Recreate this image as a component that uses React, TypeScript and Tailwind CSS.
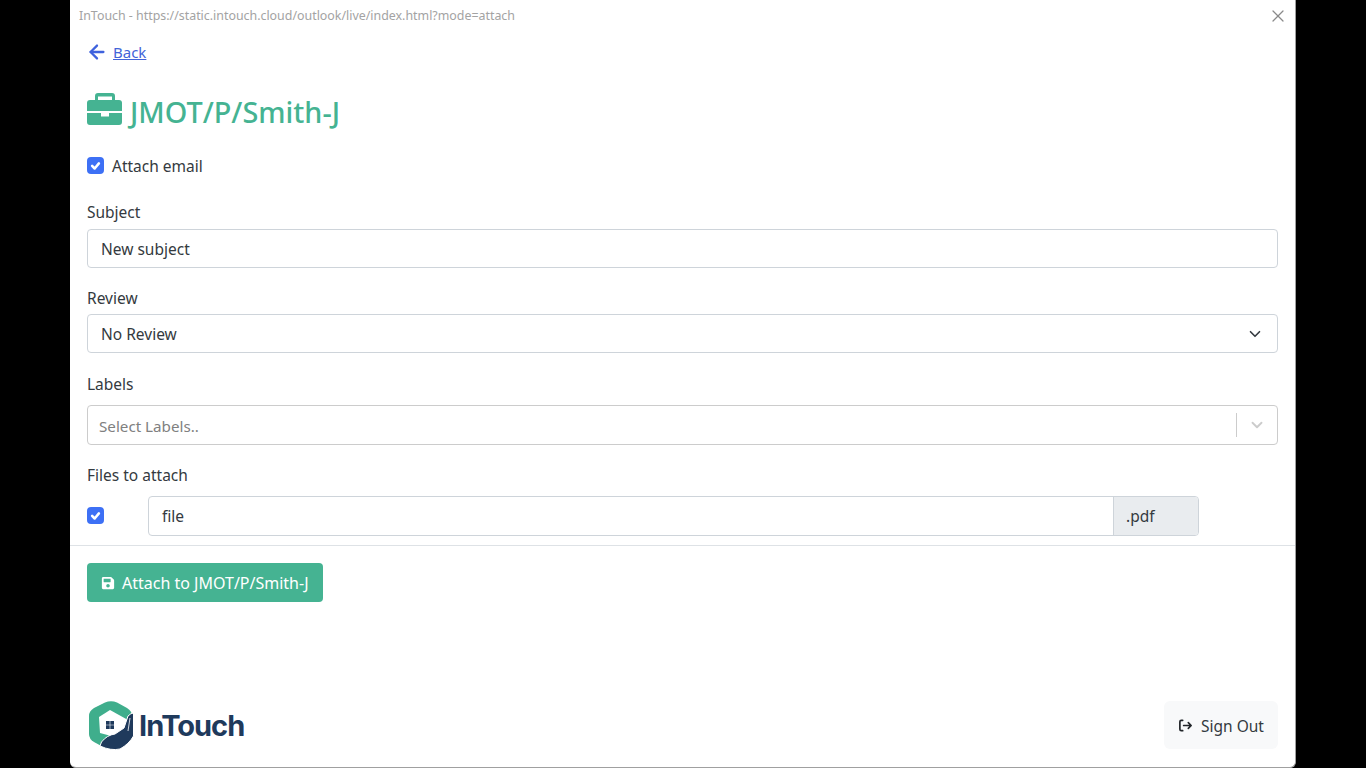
import { ArrowLeft, ChevronDown, X } from "lucide-react";
import { FaSave } from "react-icons/fa";

function CheckBox() {
  return (
    <span className="flex h-[17px] w-[17px] items-center justify-center rounded-[4px] bg-[#3d70f5]">
      <svg viewBox="0 0 20 20" className="h-[17px] w-[17px]" fill="none" stroke="#fff" strokeWidth="3" strokeLinecap="round" strokeLinejoin="round">
        <path d="M6 10.500l3 3 5-6" />
      </svg>
    </span>
  );
}

function Briefcase() {
  return (
    <svg viewBox="0 0 35 32" className="mb-[6px] h-[32px] w-[35px] shrink-0" fill="#45b392">
      <path d="M8 8V3a3 3 0 0 1 3-3h14a3 3 0 0 1 3 3v5h-3V3.500H11V8Z" />
      <path d="M3 7h29a3 3 0 0 1 3 3v8H0v-8a3 3 0 0 1 3-3Z" />
      <path d="M0 20h14v3.500h8V20h13v9a3 3 0 0 1-3 3H3a3 3 0 0 1-3-3Z" />
    </svg>
  );
}

function SignOutIcon() {
  return (
    <svg viewBox="0 0 16 16" className="h-[15px] w-[15px]" fill="none" stroke="#212529" strokeWidth="1.800" strokeLinecap="round" strokeLinejoin="round">
      <path d="M5 2.500H3.500a1.500 1.500 0 0 0-1.500 1.500v8a1.500 1.500 0 0 0 1.500 1.500H5" />
      <path d="M6 8h8M11 5l3 3-3 3" />
    </svg>
  );
}

function Logo() {
  return (
    <svg viewBox="0 0 48 50" className="h-[50px] w-[48px]">
      <path d="M18 2.500Q24 0 30 2.500L40 8Q45 11 45 16V34Q45 39 40 42L30 48Q24 50 18 48L7 42Q2 39 2 34V16Q2 11 7 8Z" fill="#3fae8c" />
      <path d="M12 17L23 10L41 20V30L28 37L13 33Z" fill="#fff" />
      <path d="M19 21h3.700v3.700H19zM23.300 21H27v3.700h-3.700zM19 25.300h3.700V29H19zM23.300 25.300H27V29h-3.700z" fill="#1f3a5c" />
      <path d="M13 46L14.500 42Q20 35 28 34L37 28L41 16Q44 13 46.500 13V36Q42 44 33 49Q24 51 13 46Z" fill="#1f3a5c" stroke="#fff" strokeWidth="1" />
      <path d="M43 18L41 31" stroke="#fff" strokeWidth="0.800" />
    </svg>
  );
}

export default function App() {
  return (
    <div className="flex h-[768px] justify-center overflow-hidden bg-black font-['Noto_Sans','Open_Sans',sans-serif] text-[15.500px] text-[#343a40]">
      <div className="flex h-full w-[1226px] flex-col rounded-b-md border-r border-b border-[#a0a0a0] bg-white">
        <div className="flex h-[32px] shrink-0 items-center justify-between pl-[9px] pr-[7px]">
          <span className="text-[12.400px] text-[#a3a3a3]">InTouch - https://static.intouch.cloud/outlook/live/index.html?mode=attach</span>
          <X className="h-5 w-5 text-[#8a8a8a]" strokeWidth={1.500} />
        </div>

        <div className="flex flex-col pl-[17px] pr-[17px]">
          <div className="mt-[8px] flex h-6 items-center gap-[5px]">
            <ArrowLeft className="-ml-[1px] h-[22px] w-[22px] text-[#3f62dd]" strokeWidth={2.500} />
            <a className="text-[15px] text-[#4263d8] underline">Back</a>
          </div>

          <div className="mt-[28px] flex h-[40px] items-center gap-2 text-[#45b392]">
            <Briefcase />
            <span className="text-[28.800px] font-medium leading-none">JMOT/P/Smith-J</span>
          </div>

          <label className="mt-[21px] flex h-6 items-center gap-2">
            <CheckBox />
            <span className="pt-[3px]">Attach email</span>
          </label>

          <div className="mt-[23px] h-6 leading-6">Subject</div>
          <div className="mt-[5px] flex h-[39px] items-center rounded border border-[#ced4da] px-[13px]">
            <span className="pt-[2px]">New subject</span>
          </div>

          <div className="mt-[18px] h-6 leading-6">Review</div>
          <div className="mt-[4px] flex h-[39px] items-center justify-between rounded border border-[#ced4da] pl-[13px] pr-[13px]">
            <span className="pt-[2px]">No Review</span>
            <ChevronDown className="h-[18px] w-[18px] text-[#343a40]" strokeWidth={2.200} />
          </div>

          <div className="mt-[19px] h-6 leading-6">Labels</div>
          <div className="mt-[9px] flex h-[40px] items-center justify-between rounded border border-[#cccccc] pl-[11px]">
            <span className="pt-[3px] text-[15.200px] text-[#808080]">Select Labels..</span>
            <div className="flex items-center">
              <span className="h-6 w-px bg-[#cccccc]" />
              <ChevronDown className="mx-[11px] h-[18px] w-[18px] text-[#cccccc]" strokeWidth={2.500} />
            </div>
          </div>

          <div className="mt-[18px] h-6 leading-6">Files to attach</div>
          <div className="mt-[9px] flex h-[40px] items-center">
            <div className="mb-[2px] w-[61px]">
              <CheckBox />
            </div>
            <div className="flex h-full w-[1051px] rounded border border-[#ced4da]">
              <div className="flex flex-1 items-center px-[13px] pt-[2px]">file</div>
              <div className="flex w-[85px] items-center rounded-r-[3px] border-l border-[#ced4da] bg-[#e9ecef] px-[12px] pt-[2px]">.pdf</div>
            </div>
          </div>
        </div>

        <div className="mt-[9px] h-px shrink-0 bg-[#dee2e6]" />

        <div className="px-[17px] pt-[17px]">
          <button className="flex h-[39px] w-[236px] items-center gap-[7px] rounded bg-[#45b392] pl-[14px] text-[16px] text-white">
            <FaSave className="h-[14px] w-[14px]" />
            <span>Attach to JMOT/P/Smith-J</span>
          </button>
        </div>

        <div className="mt-auto mb-[17px] flex items-center justify-between pl-[17px] pr-[17px]">
          <div className="flex items-center gap-[4px]">
            <Logo />
            <span className="font-['Inter',sans-serif] text-[29px] font-bold leading-none tracking-[-1px] text-[#1f3a5c]">InTouch</span>
          </div>
          <button className="flex h-[48px] w-[114px] items-center justify-center gap-2 rounded-md bg-[#f8f9fa]">
            <SignOutIcon />
            <span className="pt-[3px]">Sign Out</span>
          </button>
        </div>
      </div>
    </div>
  );
}
